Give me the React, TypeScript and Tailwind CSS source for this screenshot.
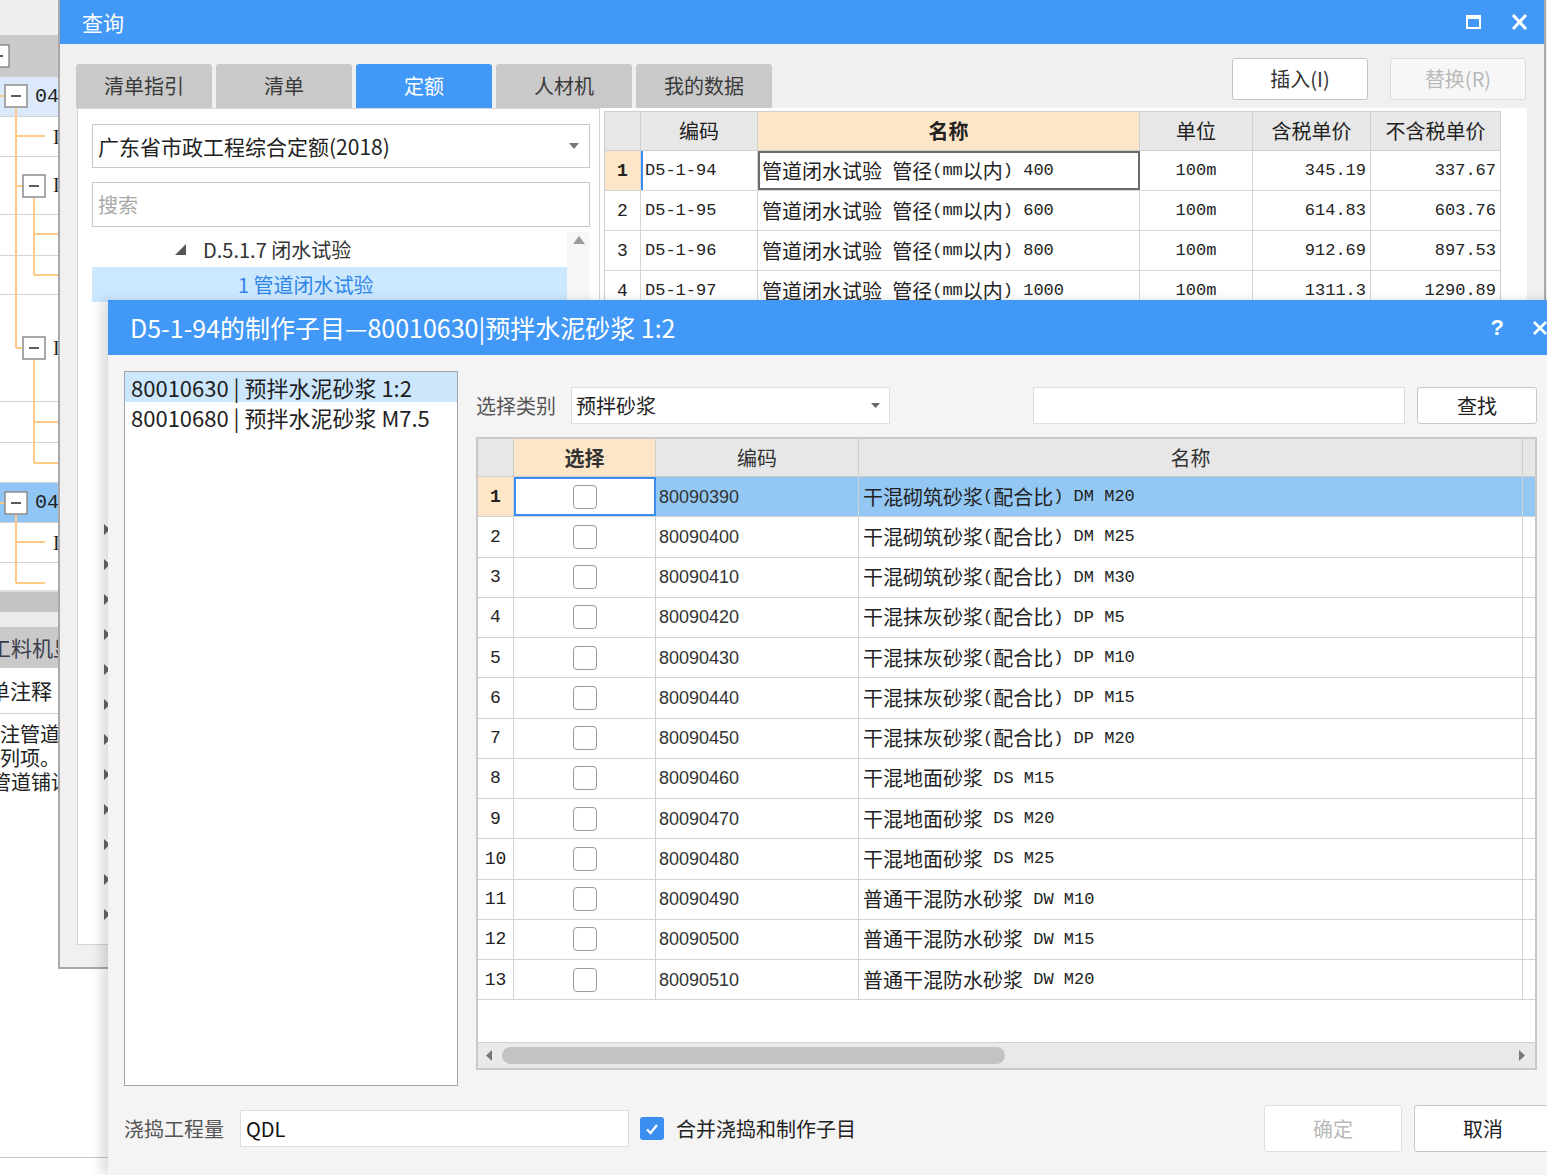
import React from "react";

// ascii runs of a mixed string get a narrow mono face, like SimSun's half-width glyphs
function Mixed({ t }: { t: string }) {
	const parts = t.split(/([\x00-\xff]+)/).filter(Boolean);
	return (
		<>
			{parts.map((p, i) =>
				/^[\x00-\xff]+$/.test(p) ? (
					<span key={i} className="whitespace-pre font-['Liberation_Mono',monospace] text-[17px]">
						{p}
					</span>
				) : (
					<span key={i}>{p}</span>
				)
			)}
		</>
	);
}

function MinusBox({ x, y }: { x: number; y: number }) {
	return (
		<g>
			<rect x={x} y={y} width={22} height={22} fill="#fff" stroke="#8c8c8c" strokeWidth={1.5} />
			<line x1={x + 6} y1={y + 11} x2={x + 16} y2={y + 11} stroke="#333" strokeWidth={1.6} />
		</g>
	);
}

function BgApp() {
	return (
		<div className="absolute left-0 top-0 w-[200px] h-full flex flex-col bg-white text-[#222]">
			<div className="h-[35px] shrink-0 bg-[#efefef]" />
			<div className="h-[42px] shrink-0 bg-[#cacaca]" />
			<div className="h-[40px] shrink-0 bg-[#dce9fb] border-b border-[#d2d2d2] pl-[35px] flex items-center font-['Liberation_Mono',monospace] text-[20px]">0402</div>
			<div className="h-[40px] shrink-0 border-b border-[#d2d2d2] pl-[53px] flex items-center font-['Liberation_Serif',serif] text-[20px]">I</div>
			<div className="h-[58px] shrink-0 border-b border-[#d2d2d2] pl-[53px] pt-[14px] font-['Liberation_Serif',serif] text-[20px] leading-[28px]">I</div>
			<div className="h-[41px] shrink-0 border-b border-[#d2d2d2]" />
			<div className="h-[39px] shrink-0 border-b border-[#d2d2d2]" />
			<div className="h-[107px] shrink-0 border-b border-[#d2d2d2] pl-[53px] pt-[39px] font-['Liberation_Serif',serif] text-[20px] leading-[28px]">I</div>
			<div className="h-[41px] shrink-0 border-b border-[#d2d2d2]" />
			<div className="h-[40px] shrink-0 border-b border-[#d2d2d2]" />
			<div className="h-[40px] shrink-0 bg-[#90c6f5] border-b border-[#d2d2d2] pl-[35px] flex items-center font-['Liberation_Mono',monospace] text-[20px]">0402</div>
			<div className="h-[40px] shrink-0 border-b border-[#d2d2d2] pl-[53px] flex items-center font-['Liberation_Serif',serif] text-[20px]">I</div>
			<div className="h-[27px] shrink-0" />
			<div className="h-[22px] shrink-0 bg-[#c4c4c4] border-t-2 border-[#dedede]" />
			<div className="h-[15px] shrink-0 bg-[#ececec]" />
			<div className="h-[41px] shrink-0 bg-[#c9c9c9] flex items-center overflow-hidden text-[21px] text-[#3d3d4d]">
				<span className="ml-[-10px] whitespace-nowrap">工料机显示</span>
			</div>
			<div className="h-[46px] shrink-0 border-b border-[#cfcfcf] flex items-center overflow-hidden text-[21px]">
				<span className="ml-[-32px] whitespace-nowrap">清单注释</span>
			</div>
			<div className="pt-[8px] shrink-0 overflow-hidden text-[20px] leading-[24px] whitespace-nowrap">
				<div className="ml-[-20px] h-[24px]">备注管道铺设</div>
				<div className="ml-[-20px] h-[24px]">例列项。</div>
				<div className="ml-[-20px] h-[24px]">3管道铺设</div>
			</div>
			<div className="flex-1 border-b border-[#c8c8c8]" />
			<div className="h-[17px] shrink-0 bg-white" />

			<svg className="absolute left-0 top-0 pointer-events-none" width={60} height={600}>
				<g stroke="#ffc986" strokeWidth={2} fill="none">
					<line x1={0} y1={96} x2={5} y2={96} />
					<line x1={16} y1={107} x2={16} y2={348} />
					<line x1={16} y1={136} x2={45} y2={136} />
					<line x1={16} y1={186} x2={23} y2={186} />
					<line x1={34} y1={197} x2={34} y2={275} />
					<line x1={34} y1={234} x2={60} y2={234} />
					<line x1={34} y1={275} x2={60} y2={275} />
					<line x1={16} y1={348} x2={23} y2={348} />
					<line x1={34} y1={359} x2={34} y2={463} />
					<line x1={34} y1={422} x2={60} y2={422} />
					<line x1={34} y1={463} x2={60} y2={463} />
					<line x1={0} y1={503} x2={5} y2={503} />
					<line x1={16} y1={514} x2={16} y2={583} />
					<line x1={16} y1={542} x2={45} y2={542} />
					<line x1={16} y1={583} x2={45} y2={583} />
				</g>
				<MinusBox x={-13} y={45} />
				<MinusBox x={5} y={85} />
				<MinusBox x={23} y={175} />
				<MinusBox x={23} y={337} />
				<MinusBox x={5} y={492} />
			</svg>
		</div>
	);
}

const qRows = [
	["1", "D5-1-94", "管道闭水试验 管径(mm以内) 400", "100m", "345.19", "337.67"],
	["2", "D5-1-95", "管道闭水试验 管径(mm以内) 600", "100m", "614.83", "603.76"],
	["3", "D5-1-96", "管道闭水试验 管径(mm以内) 800", "100m", "912.69", "897.53"],
	["4", "D5-1-97", "管道闭水试验 管径(mm以内) 1000", "100m", "1311.3", "1290.89"],
];

function QueryWindow() {
	const tabs = ["清单指引", "清单", "定额", "人材机", "我的数据"];
	return (
		<div className="absolute left-[58px] top-0 w-[1488px] h-[969px] flex flex-col bg-[#f0f0f0] border-x-2 border-b-2 border-[#a9a9a9]">
			{/* title bar */}
			<div className="h-[44px] shrink-0 bg-[#4298f7] flex items-center pl-[22px] pr-[16px] text-white text-[21px]">
				<span>查询</span>
				<div className="ml-auto flex items-center gap-[30px]">
					<svg width={15} height={14} viewBox="0 0 15 14">
						<rect x={1} y={1.5} width={13} height={11.5} fill="none" stroke="#fff" strokeWidth={2} />
						<rect x={0} y={0} width={15} height={4} fill="#fff" />
					</svg>
					<svg width={17} height={16} viewBox="0 0 17 16">
						<path d="M2 1 L15 15 M15 1 L2 15" stroke="#fff" strokeWidth={3} />
					</svg>
				</div>
			</div>

			{/* tabs + actions */}
			<div className="h-[64px] shrink-0 flex items-end pl-[16px] pr-[18px]">
				<div className="flex gap-[4px]">
					{tabs.map((t) => (
						<div
							key={t}
							className={
								t === "定额"
									? "w-[136px] h-[44px] rounded-t-[3px] bg-[#4298f7] text-white text-[20px] flex items-center justify-center"
									: "w-[136px] h-[44px] rounded-t-[3px] bg-[#c9c9c9] text-[#3a3a3a] text-[20px] flex items-center justify-center"
							}
						>
							{t}
						</div>
					))}
				</div>
				<div className="ml-auto self-start mt-[14px] flex gap-[22px]">
					<div className="w-[136px] h-[42px] rounded-[3px] border border-[#c5c5c5] bg-white text-[20px] text-[#333] flex items-center justify-center">插入(I)</div>
					<div className="w-[136px] h-[42px] rounded-[3px] border border-[#dcdcdc] bg-[#f7f7f7] text-[20px] text-[#b9b9b9] flex items-center justify-center">替换(R)</div>
				</div>
			</div>

			{/* content */}
			<div className="flex pl-[17px] h-[837px] shrink-0">
				{/* left tree panel */}
				<div className="w-[523px] bg-white border border-[#d5d5d5] pl-[14px] pt-[15px] flex flex-col overflow-hidden">
					<div className="w-[498px] h-[44px] shrink-0 border border-[#c8c8c8] flex items-center pl-[5px] pr-[10px] text-[21px] text-[#222]">
						<span>广东省市政工程综合定额(2018)</span>
						<svg className="ml-auto" width={10} height={6}>
							<polygon points="0,0 10,0 5,6" fill="#777" />
						</svg>
					</div>
					<div className="w-[498px] h-[45px] shrink-0 mt-[14px] border border-[#c8c8c8] flex items-center pl-[5px] text-[20px] text-[#a8a8a8]">搜索</div>
					<div className="flex mt-[5px] flex-1 min-h-0">
						<div className="w-[475px] flex flex-col">
							<div className="h-[35px] shrink-0 flex items-center pl-[83px] text-[20px] text-[#333]">
								<svg width={11} height={11} className="mr-[17px]">
									<polygon points="11,0 11,11 0,11" fill="#555" />
								</svg>
								<span>D.5.1.7 闭水试验</span>
							</div>
							<div className="h-[35px] shrink-0 flex items-center pl-[146px] bg-[#cce8ff] text-[20px] text-[#2f86e8]">1 管道闭水试验</div>
							<div className="h-[210px] shrink-0" />
							{Array.from({ length: 12 }).map((_, i) => (
								<div key={i} className="h-[35px] shrink-0 flex items-center pl-[12px]">
									<svg width={6} height={11}>
										<polygon points="0,0 6,5.5 0,11" fill="#666" />
									</svg>
								</div>
							))}
						</div>
						<div className="w-[23px] flex flex-col items-center pt-[4px] bg-[#f7f7f7]">
							<svg width={12} height={8}>
								<polygon points="0,8 12,8 6,0" fill="#9a9a9a" />
							</svg>
						</div>
					</div>
				</div>

				{/* right quota table */}
				<div className="w-[927px] bg-white pl-[4px] pt-[3px]">
					<div className="w-[897px] border border-[#cfcfcf] text-[20px] text-[#222]">
						<div className="flex h-[39px] bg-[#e7e7e7] border-b border-[#cfcfcf]">
							<div className="w-[36px] border-r border-[#d0d0d0]" />
							<div className="w-[117px] border-r border-[#d0d0d0] flex items-center justify-center">编码</div>
							<div className="w-[382px] border-r border-[#d0d0d0] bg-[#fde5c7] font-bold flex items-center justify-center">名称</div>
							<div className="w-[113px] border-r border-[#d0d0d0] flex items-center justify-center">单位</div>
							<div className="w-[118px] border-r border-[#d0d0d0] flex items-center justify-center">含税单价</div>
							<div className="flex-1 flex items-center justify-center">不含税单价</div>
						</div>
						{qRows.map((r, i) => (
							<div key={r[0]} className="flex h-[40px] border-b border-[#d6d6d6]">
								<div
									className={
										i === 0
											? "w-[36px] border-r border-[#d6d6d6] bg-[#fde5c7] font-bold flex items-center justify-center font-['Liberation_Mono',monospace] text-[18px]"
											: "w-[36px] border-r border-[#d6d6d6] flex items-center justify-center font-['Liberation_Mono',monospace] text-[18px]"
									}
								>
									{r[0]}
								</div>
								<div
									className={
										i === 0
											? "w-[117px] border-r border-[#d6d6d6] border-l-2 border-l-[#3a8df0] flex items-center pl-[2px]"
											: "w-[117px] border-r border-[#d6d6d6] flex items-center pl-[4px]"
									}
								>
									<Mixed t={r[1]} />
								</div>
								<div
									className={
										i === 0
											? "w-[382px] border-2 border-[#6b6b6b] flex items-center pl-[2px] whitespace-nowrap"
											: "w-[382px] border-r border-[#d6d6d6] flex items-center pl-[4px] whitespace-nowrap"
									}
								>
									<Mixed t={r[2]} />
								</div>
								<div className="w-[113px] border-r border-[#d6d6d6] flex items-center justify-center">
									<Mixed t={r[3]} />
								</div>
								<div className="w-[118px] border-r border-[#d6d6d6] flex items-center justify-end pr-[4px]">
									<Mixed t={r[4]} />
								</div>
								<div className="flex-1 flex items-center justify-end pr-[4px]">
									<Mixed t={r[5]} />
								</div>
							</div>
						))}
					</div>
				</div>
			</div>
		</div>
	);
}

const mRows = [
	["80090390", "干混砌筑砂浆(配合比) DM M20"],
	["80090400", "干混砌筑砂浆(配合比) DM M25"],
	["80090410", "干混砌筑砂浆(配合比) DM M30"],
	["80090420", "干混抹灰砂浆(配合比) DP M5"],
	["80090430", "干混抹灰砂浆(配合比) DP M10"],
	["80090440", "干混抹灰砂浆(配合比) DP M15"],
	["80090450", "干混抹灰砂浆(配合比) DP M20"],
	["80090460", "干混地面砂浆 DS M15"],
	["80090470", "干混地面砂浆 DS M20"],
	["80090480", "干混地面砂浆 DS M25"],
	["80090490", "普通干混防水砂浆 DW M10"],
	["80090500", "普通干混防水砂浆 DW M15"],
	["80090510", "普通干混防水砂浆 DW M20"],
];

function SubDialog() {
	return (
		<div className="absolute left-[108px] top-[300px] w-[1460px] h-[875px] flex flex-col bg-[#f4f4f4] shadow-[-7px_0_10px_rgba(0,0,0,0.13)]">
			<div className="h-[55px] shrink-0 bg-[#4298f7] flex items-center pl-[22px] pr-[20px] text-white text-[25px]">
				<span>D5-1-94的制作子目—80010630|预拌水泥砂浆 1:2</span>
				<div className="ml-auto flex items-center gap-[28px]">
					<span className="font-['Liberation_Sans',sans-serif] font-bold text-[22px]">?</span>
					<svg width={16} height={16} viewBox="0 0 16 16">
						<path d="M2 2 L14 14 M14 2 L2 14" stroke="#fff" strokeWidth={2.6} />
					</svg>
				</div>
			</div>

			<div className="flex px-[16px] pt-[16px] gap-[18px]">
				{/* sub-item list */}
				<div className="w-[334px] h-[715px] border border-[#9fa3ab] bg-white text-[22px] text-[#1f1f1f]">
					<div className="h-[30px] bg-[#cce6fc] flex items-center pl-[6px] whitespace-nowrap">80010630 | 预拌水泥砂浆 1:2</div>
					<div className="h-[30px] flex items-center pl-[6px] whitespace-nowrap">80010680 | 预拌水泥砂浆 M7.5</div>
				</div>

				<div className="w-[1061px] flex flex-col">
					<div className="h-[37px] mt-[16px] flex items-center">
						<span className="w-[95px] text-[20px] text-[#555]">选择类别</span>
						<div className="w-[319px] h-[37px] border border-[#dedede] bg-white flex items-center pl-[4px] pr-[9px] text-[20px] text-[#222]">
							<span>预拌砂浆</span>
							<svg className="ml-auto" width={9} height={5}>
								<polygon points="0,0 9,0 4.5,5" fill="#666" />
							</svg>
						</div>
						<div className="w-[372px] h-[37px] ml-[143px] border border-[#dedede] bg-white" />
						<div className="w-[120px] h-[37px] ml-[12px] rounded-[3px] border border-[#c8c8c8] bg-white flex items-center justify-center text-[20px] text-[#222]">查找</div>
					</div>

					{/* grid */}
					<div className="mt-[13px] h-[633px] border-2 border-[#c9c9c9] bg-white flex flex-col">
						<div className="flex h-[38px] shrink-0 bg-[#e7e7e7] border-b border-[#cdcdcd] text-[20px] text-[#333]">
							<div className="w-[36px] border-r border-[#cdcdcd]" />
							<div className="w-[142px] border-r border-[#cdcdcd] bg-[#fde5c7] font-bold flex items-center justify-center">选择</div>
							<div className="w-[203px] border-r border-[#cdcdcd] flex items-center justify-center">编码</div>
							<div className="w-[664px] border-r border-[#cdcdcd] flex items-center justify-center">名称</div>
							<div className="flex-1" />
						</div>
						{mRows.map((r, i) => (
							<div key={r[0]} className="flex h-[40.25px] shrink-0 border-b border-[#d2d2d2] text-[20px] text-[#222]">
								<div
									className={
										i === 0
											? "w-[36px] border-r border-[#d2d2d2] bg-[#fde5c7] font-bold flex items-center justify-center font-['Liberation_Mono',monospace] text-[18px]"
											: "w-[36px] border-r border-[#d2d2d2] flex items-center justify-center font-['Liberation_Mono',monospace] text-[18px]"
									}
								>
									{i + 1}
								</div>
								<div
									className={
										i === 0
											? "w-[142px] border-2 border-[#3a8df0] flex items-center justify-center"
											: "w-[142px] border-r border-[#d2d2d2] flex items-center justify-center"
									}
								>
									<div className="w-[24px] h-[24px] rounded-[4px] border-[1.5px] border-[#9a9a9a] bg-white" />
								</div>
								<div
									className={
										i === 0
											? "w-[203px] border-r border-[#d2d2d2] bg-[#93c8f5] flex items-center pl-[3px] font-['Liberation_Sans',sans-serif] text-[18px] text-[#333]"
											: "w-[203px] border-r border-[#d2d2d2] flex items-center pl-[3px] font-['Liberation_Sans',sans-serif] text-[18px] text-[#333]"
									}
								>
									{r[0]}
								</div>
								<div
									className={
										i === 0
											? "w-[664px] border-r border-[#d2d2d2] bg-[#93c8f5] flex items-center pl-[4px] whitespace-nowrap"
											: "w-[664px] border-r border-[#d2d2d2] flex items-center pl-[4px] whitespace-nowrap"
									}
								>
									<Mixed t={r[1]} />
								</div>
								<div className={i === 0 ? "flex-1 bg-[#93c8f5]" : "flex-1"} />
							</div>
						))}
						<div className="flex-1" />
						<div className="h-[26px] shrink-0 bg-[#e9e9e9] border-t border-[#cfcfcf] flex items-center">
							<svg className="ml-[8px]" width={6} height={11}>
								<polygon points="6,0 0,5.5 6,11" fill="#777" />
							</svg>
							<div className="ml-[10px] w-[503px] h-[17px] rounded-full bg-[#c3c3c3]" />
							<svg className="ml-auto mr-[10px]" width={6} height={11}>
								<polygon points="0,0 6,5.5 0,11" fill="#777" />
							</svg>
						</div>
					</div>
				</div>
			</div>

			{/* footer */}
			<div className="flex items-center h-[47px] mt-[19px] px-[16px]">
				<span className="w-[116px] text-[20px] text-[#555]">浇捣工程量</span>
				<div className="w-[389px] h-[37px] border border-[#dedede] bg-white flex items-center pl-[5px] text-[20px] text-[#111]">QDL</div>
				<div className="ml-[11px] w-[24px] h-[23px] rounded-[3px] bg-[#3c8ef0] flex items-center justify-center">
					<svg width={14} height={12} viewBox="0 0 14 12">
						<path d="M2 6.5 L5.5 10 L12 2" stroke="#fff" strokeWidth={2.2} fill="none" />
					</svg>
				</div>
				<span className="ml-[12px] text-[20px] text-[#222]">合并浇捣和制作子目</span>
				<div className="ml-auto flex gap-[12px]">
					<div className="w-[138px] h-[47px] rounded-[3px] border border-[#e0e0e0] bg-white flex items-center justify-center text-[20px] text-[#b9b9b9]">确定</div>
					<div className="w-[138px] h-[47px] rounded-[3px] border border-[#c6c6c6] bg-white flex items-center justify-center text-[20px] text-[#222]">取消</div>
				</div>
			</div>
		</div>
	);
}

export default function App() {
	return (
		<div className="relative w-[1547px] h-[1175px] overflow-hidden bg-[#f0f0f0] font-['Noto_Sans_CJK_SC',sans-serif] leading-none">
			<BgApp />
			<QueryWindow />
			<SubDialog />
		</div>
	);
}
